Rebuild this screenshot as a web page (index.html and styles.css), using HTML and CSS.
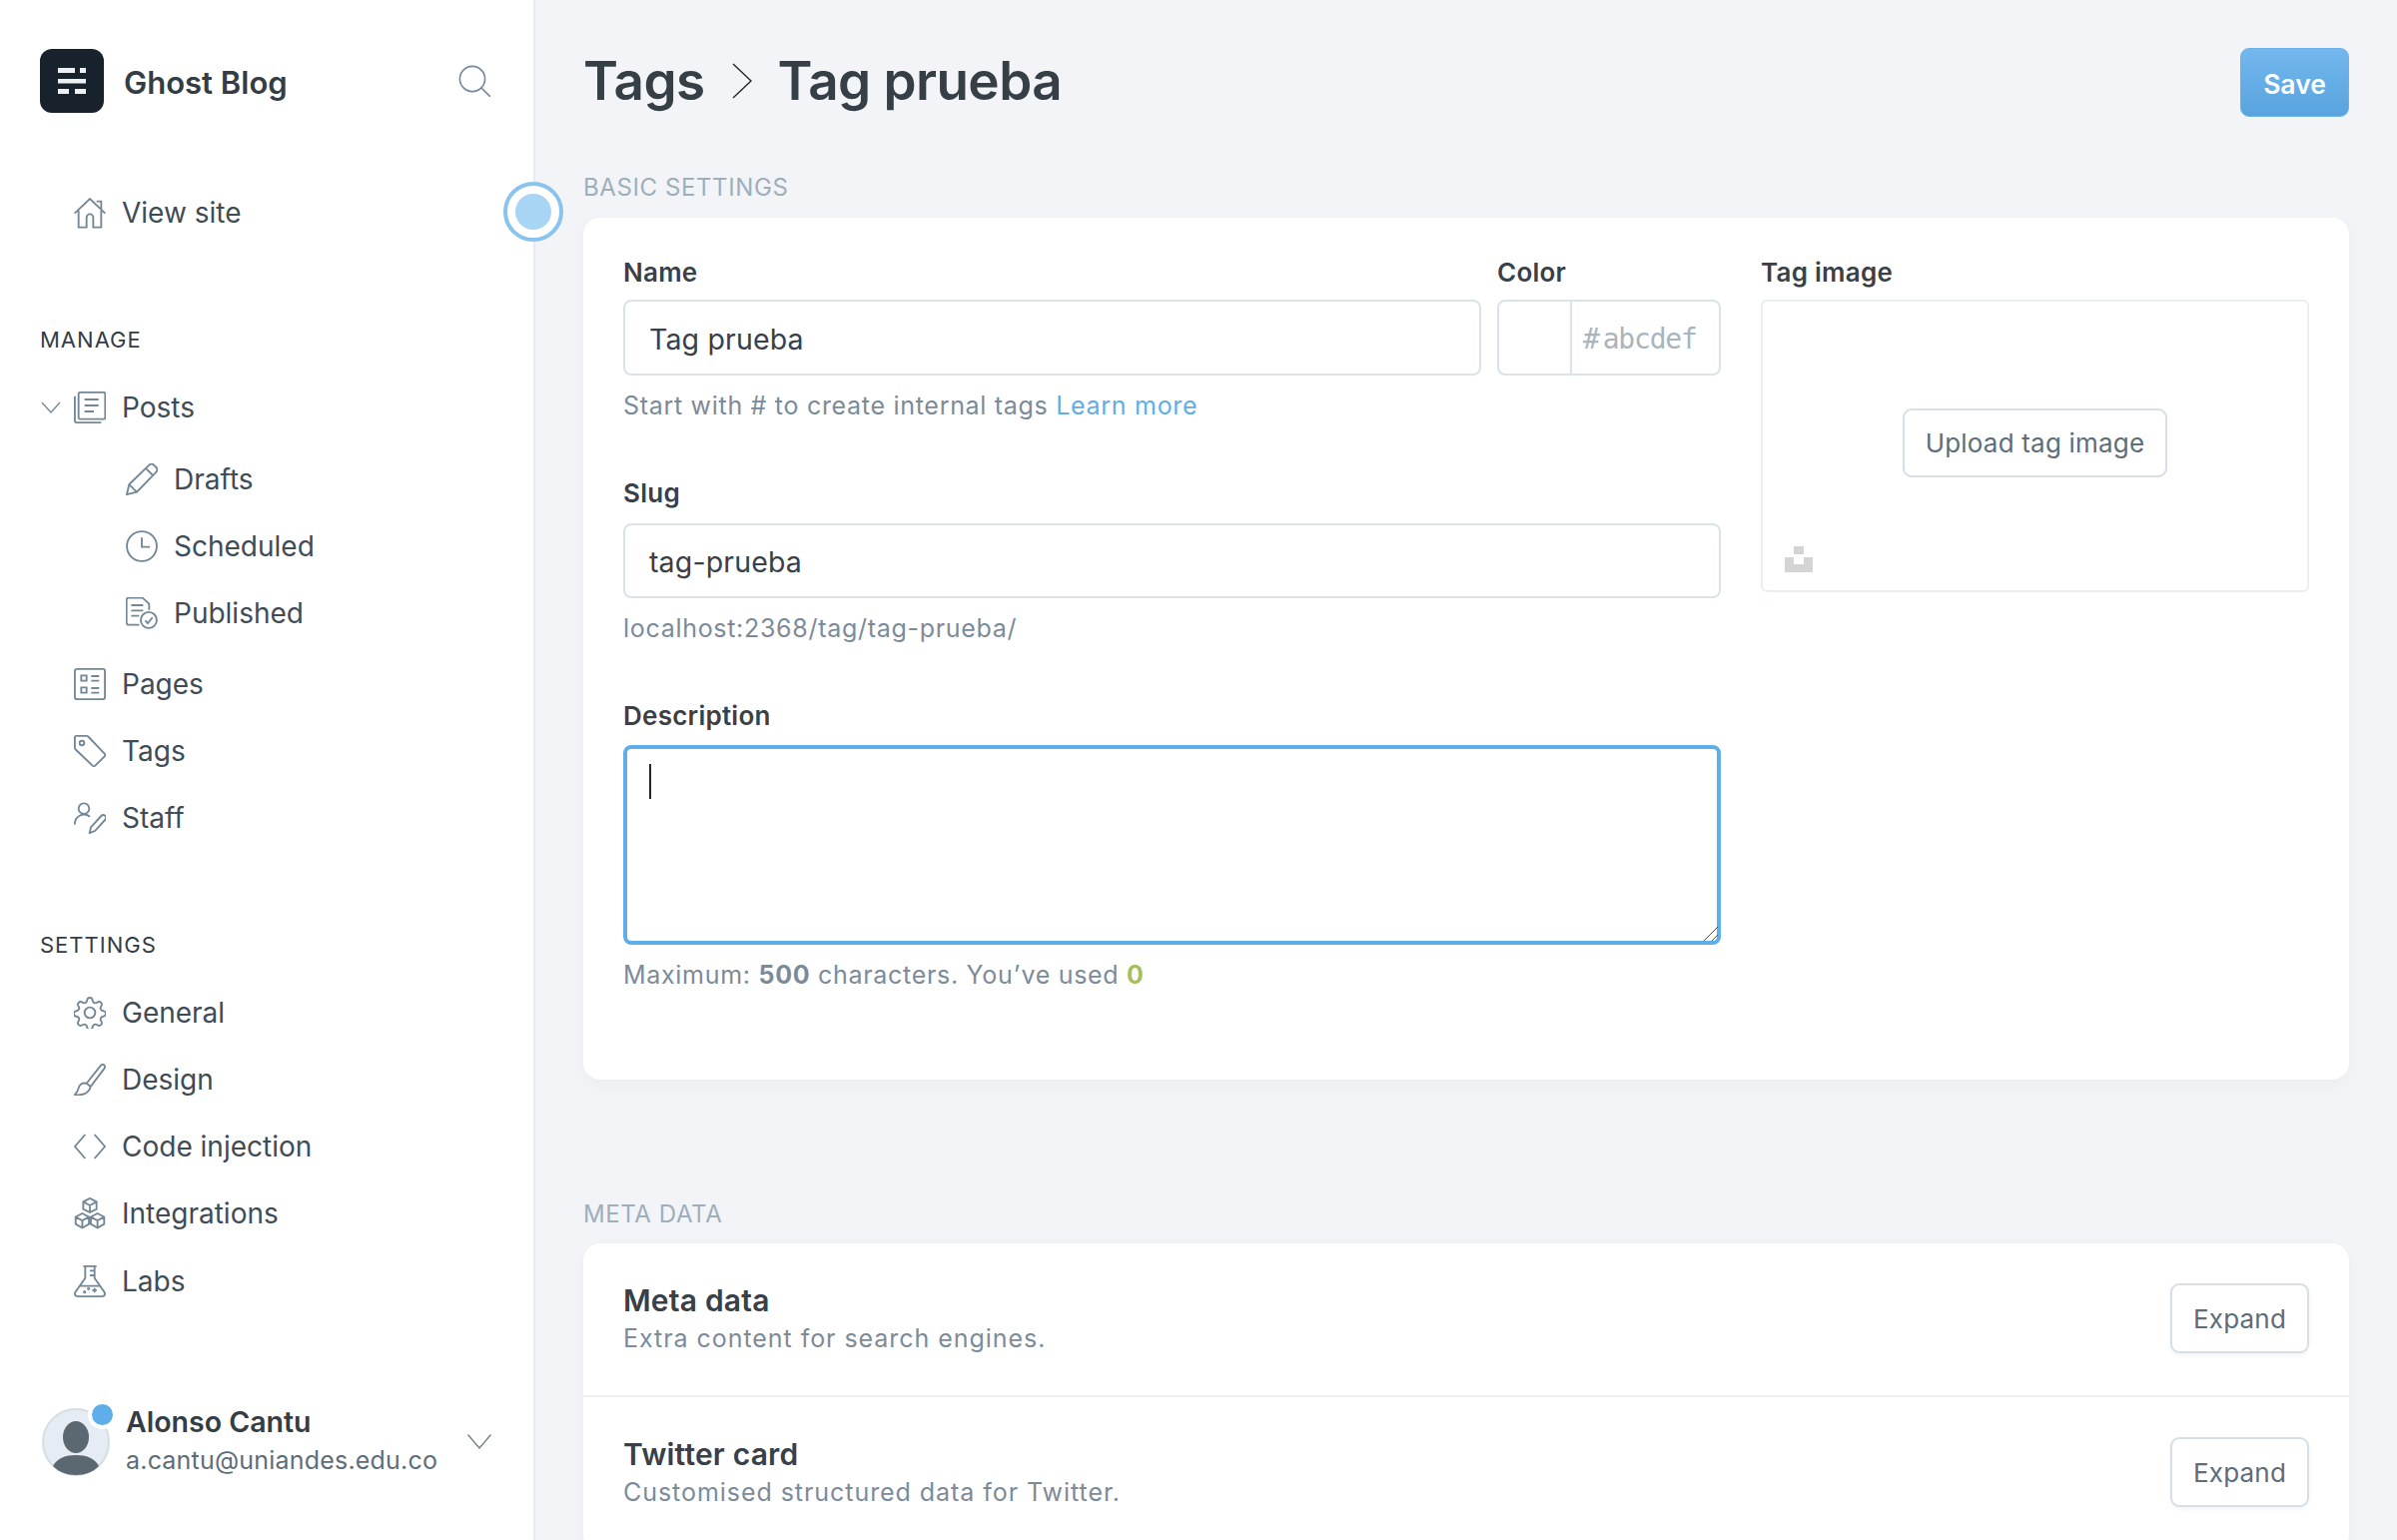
FILE: index.html
```html
<!DOCTYPE html>
<html>
<head>
<meta charset="utf-8">
<title>Tags - Ghost Blog</title>
<link rel="stylesheet" href="styles.css">
</head>
<body>
<div class="app">
  <!-- sidebar -->
  <aside class="side">
    <div class="brand">
      <svg class="logo" viewBox="0 0 64 64">
        <rect width="64" height="64" rx="12" fill="#18222c"/>
        <g fill="#eef1f4">
          <rect x="18" y="19" width="17" height="5"/><rect x="40" y="19" width="6" height="5"/>
          <rect x="18" y="30" width="28" height="4.5"/>
          <rect x="18" y="40" width="11" height="5"/><rect x="35" y="40" width="11" height="5"/>
        </g>
      </svg>
      <span class="brand-name">Ghost Blog</span>
      <svg class="search" viewBox="0 0 32 32"><circle cx="14" cy="14" r="12.6"/><path d="M23 23l9 9"/></svg>
    </div>

    <a class="nav view-site">
      <svg class="ico" viewBox="0 0 24 24"><path d="M.5 12.5L12 1.5l11.5 11M17 3.5h3.5V9M3.5 10.5v12.5h6v-7.500a2.500 2.500 0 015 0V23h6V10.500"/></svg>
      View site
    </a>

    <div class="side-head first">Manage</div>
    <a class="nav has-arrow">
      <svg class="arrow" viewBox="0 0 20 12"><path d="M1 1l9 10 9-10"/></svg>
      <svg class="ico" viewBox="0 0 24 24"><rect x="3.500" y=".7" width="20" height="20" rx="1"/><path d="M.7 3.500V22a1.300 1.300 0 001.300 1.300h18.500M8 6h10.500M8 10.500h10.500M8 15h7"/></svg>
      Posts
    </a>
    <div class="sub">
      <a class="nav sub-item">
        <svg class="ico" viewBox="0 0 24 24"><path d="M.7 23.300l1.800-7.500L17.500 1.200a2.500 2.500 0 013.500 0l1.800 1.800a2.500 2.500 0 010 3.500L8.200 21.500zM2.500 15.800l5.700 5.700M15 3.700l5.300 5.300M5 13.300L17.500 1.200M10.700 19L22.800 6.500"/></svg>
        Drafts
      </a>
      <a class="nav sub-item">
        <svg class="ico" viewBox="0 0 24 24"><circle cx="12" cy="12" r="11.200"/><path d="M12 5.500V12.500h6"/></svg>
        Scheduled
      </a>
      <a class="nav sub-item">
        <svg class="ico" viewBox="0 0 24 24"><path d="M10 20.700H2a1.500 1.500 0 01-1.500-1.500V2A1.500 1.500 0 012 .5h10.500l5 4.500v4.500M4 6h9M4 10h9M4 14h6"/><circle cx="17.200" cy="17.200" r="6"/><path d="M14.500 17.500l2 2 3.500-4.300"/></svg>
        Published
      </a>
    </div>
    <a class="nav">
      <svg class="ico" viewBox="0 0 24 24"><rect x=".7" y=".7" width="22.600" height="22.600" rx="1.500"/><path d="M5.500 5.500h4v4h-4zM5.500 14.500h4v4h-4zM13 6h6M13 9.500h6M13 15h6M13 18.500h6"/></svg>
      Pages
    </a>
    <a class="nav">
      <svg class="ico" viewBox="0 0 24 24"><path d="M1.800.7h7.700a2 2 0 011.400.6L23 14a1.500 1.500 0 010 2l-7 7a1.500 1.500 0 01-2 0L1.300 10.900a2 2 0 01-.6-1.400V1.800A1.100 1.100 0 011.800.7z"/><circle cx="6" cy="6" r="1.700"/></svg>
      Tags
    </a>
    <a class="nav">
      <svg class="ico" viewBox="0 0 24 24"><circle cx="7.500" cy="5" r="4"/><path d="M.7 17a7 7 0 0111.300-6M11.800 23.300l.9-4.300 7.800-8.500a2 2 0 013 2.800l-7.500 8.300z"/></svg>
      Staff
    </a>

    <div class="side-head">Settings</div>
    <a class="nav">
      <svg class="ico" viewBox="0 0 24 24"><circle cx="12" cy="12" r="4"/><path d="M10 2.300a2 2 0 013.900 0l.3 1a2 2 0 002.900 1.200l.9-.5a2 2 0 012.700 2.700l-.5.900a2 2 0 001.200 2.900l1 .3a2 2 0 010 3.900l-1 .3a2 2 0 00-1.200 2.900l.5.900a2 2 0 01-2.700 2.700l-.9-.5a2 2 0 00-2.900 1.200l-.3 1a2 2 0 01-3.900 0l-.3-1a2 2 0 00-2.900-1.200l-.9.500a2 2 0 01-2.700-2.700l.5-.9a2 2 0 00-1.200-2.900l-1-.3a2 2 0 010-3.900l1-.3a2 2 0 001.200-2.900l-.5-.9a2 2 0 012.700-2.700l.9.500a2 2 0 002.900-1.200z"/></svg>
      General
    </a>
    <a class="nav">
      <svg class="ico" viewBox="0 0 24 24"><path d="M9.500 14.800L20.300 1.300a1.700 1.700 0 012.500 2.400L12.500 17.300zM9.500 14.800c-3.500-.8-5.500 1-6 3.500-.3 2-1.200 3.500-2.800 5 4 .5 8-.2 10-2.500 1.200-1.300 1.700-2.500 1.800-3.500"/></svg>
      Design
    </a>
    <a class="nav">
      <svg class="ico" viewBox="0 0 24 24"><path d="M8.500 3L.7 12l7.800 9M15.500 3l7.800 9-7.800 9"/></svg>
      Code injection
    </a>
    <a class="nav">
      <svg class="ico" viewBox="0 0 24 24"><path d="M12 .7l5 2.600v5.400l-5 2.600-5-2.600V3.300zM7 3.300l5 2.700 5-2.700M12 6v5.300M6.300 12l5 2.600V20l-5 2.900-5-2.900v-5.400zM1.300 14.600l5 2.700 5-2.700M6.300 17.300v5.600M17.700 12l5 2.600V20l-5 2.900-5-2.900v-5.400zM12.700 14.600l5 2.700 5-2.700M17.700 17.300v5.600"/></svg>
      Integrations
    </a>
    <a class="nav labs">
      <svg class="ico" viewBox="0 0 24 24"><path d="M7 .7h10M8.500.7v8.800L1 20.300c-.8 1.500 0 3 1.800 3h18.400c1.800 0 2.600-1.500 1.800-3L15.500 9.500V.7M12 4h3.500M12 7.500h3.500M4.500 15.500h15"/><circle cx="8" cy="20" r=".5"/><circle cx="11" cy="17.500" r=".5"/><path d="M15.500 17v3.500M13.700 18.700h3.500"/></svg>
      Labs
    </a>

    <div class="user">
      <div class="avatar">
        <svg viewBox="0 0 68 68"><circle cx="34" cy="34" r="33" fill="#e5ecf3" stroke="#d5dde5" stroke-width="2"/><ellipse cx="34" cy="29" rx="13" ry="16" fill="#5b6871"/><path d="M11 58c4-8 13-11 23-11s19 3 23 11c-6 6-14 9-23 9s-17-3-23-9z" fill="#5b6871"/></svg>
        <span class="avatar-dot"></span>
      </div>
      <div class="user-text">
        <div class="user-name">Alonso Cantu</div>
        <div class="user-mail">a.cantu@uniandes.edu.co</div>
      </div>
      <svg class="user-arrow" viewBox="0 0 24 15"><path d="M.5.500L12 14 23.500.500"/></svg>
    </div>

    <span class="pulse"></span>
  </aside>

  <!-- main content -->
  <main class="main">
    <header class="top">
      <h1 class="crumbs">
        <span>Tags</span>
        <svg class="crumb-arrow" viewBox="0 0 20 36"><path d="M1 1l18 17L1 35"/></svg>
        <span>Tag prueba</span>
      </h1>
      <button class="btn-save">Save</button>
    </header>

    <div class="sec-title basic">Basic settings</div>
    <section class="card form-card">
      <div class="form-left">
        <div class="name-row">
          <div class="name-col">
            <label class="lbl">Name</label>
            <input class="txt name-input" value="Tag prueba">
          </div>
          <div class="color-col">
            <label class="lbl">Color</label>
            <div class="color-box">
              <span class="swatch"></span>
              <span class="color-val">#<i>abcdef</i></span>
            </div>
          </div>
        </div>
        <p class="hint">Start with # to create internal tags <a class="link">Learn more</a></p>

        <label class="lbl lbl-slug">Slug</label>
        <input class="txt slug-input" value="tag-prueba">
        <p class="hint">localhost:2368/tag/tag-prueba/</p>

        <label class="lbl lbl-desc">Description</label>
        <div class="desc-wrap">
          <textarea class="desc"></textarea>
          <span class="caret"></span>
          <svg class="grip" viewBox="0 0 14 14"><path d="M14 0L0 14M14 8l-6 6"/></svg>
        </div>
        <p class="hint">Maximum: <b>500</b> characters. You’ve used <b class="ok">0</b></p>
      </div>

      <div class="form-right">
        <label class="lbl">Tag image</label>
        <div class="img-box">
          <button class="btn upload">Upload tag image</button>
          <svg class="unsplash" viewBox="0 0 28 26"><path d="M9 0h10v8H9zM0 11h9v7h10v-7h9v15H0z" fill="#d4d4d4"/></svg>
        </div>
      </div>
    </section>

    <div class="sec-title meta">Meta data</div>
    <section class="card">
      <div class="meta-row">
        <div>
          <div class="meta-name">Meta data</div>
          <div class="meta-sub">Extra content for search engines.</div>
        </div>
        <button class="btn expand">Expand</button>
      </div>
      <div class="meta-row">
        <div>
          <div class="meta-name">Twitter card</div>
          <div class="meta-sub">Customised structured data for Twitter.</div>
        </div>
        <button class="btn expand">Expand</button>
      </div>
    </section>
  </main>
</div>
</body>
</html>
```

FILE: styles.css
```css
* {
  box-sizing: border-box;
}
html, body {
  margin: 0;
  height: 100%;
  overflow: hidden;
}
body {
  font-family: Inter, "Noto Sans", sans-serif;
  color: #394047;
  background: #f2f4f8;
}
.app {
  display: flex;
  height: 1542px;
}

/* sidebar */
.side {
  position: relative;
  flex: none;
  width: 536px;
  padding-top: 49px;
  display: flex;
  flex-direction: column;
  background: #fff;
  border-right: 2px solid #e8ebf0;
}
.brand {
  display: flex;
  align-items: center;
  height: 64px;
  padding: 0 43px 0 40px;
}
.logo {
  width: 64px;
  height: 64px;
}
.brand-name {
  margin-left: 20px;
  padding-top: 2px;
  font-size: 31px;
  font-weight: 600;
  color: #343d45;
}
.search {
  margin-left: auto;
  width: 32px;
  height: 32px;
  fill: none;
  stroke: #748796;
  stroke-width: 1.6;
}
.nav {
  display: flex;
  align-items: center;
  height: 67px;
  padding-left: 74px;
  font-size: 28px;
  color: #3f4c56;
}
.labs {
  margin-top: 1px;
}
.ico {
  flex: none;
  width: 32px;
  height: 32px;
  margin-right: 16px;
  fill: none;
  stroke: #748796;
  stroke-width: 1.4;
}
.view-site {
  margin-top: 66px;
}
.side-head {
  height: 28px;
  margin: 80px 0 20px 40px;
  font-size: 22px;
  line-height: 28px;
  letter-spacing: 1px;
  text-transform: uppercase;
  color: #343d45;
}
.has-arrow {
  padding-left: 41px;
}
.arrow {
  width: 20px;
  height: 12px;
  margin-right: 13px;
  fill: none;
  stroke: #748796;
  stroke-width: 1.3;
}
.sub {
  margin: 5px 0 4px;
}
.sub-item {
  padding-left: 126px;
}
.user {
  display: flex;
  align-items: center;
  margin-top: auto;
  margin-bottom: 62px;
  padding: 0 42px 0 42px;
}
.avatar {
  position: relative;
  width: 68px;
  height: 68px;
}
.avatar svg {
  display: block;
  width: 68px;
  height: 68px;
}
.avatar-dot {
  position: absolute;
  top: -4px;
  right: -3px;
  width: 21px;
  height: 21px;
  border-radius: 50%;
  background: #5fade9;
  box-shadow: 0 0 0 4px #fff;
}
.user-text {
  margin-left: 16px;
  padding-bottom: 3px;
}
.user-name {
  font-size: 28.5px;
  font-weight: 600;
  line-height: 34px;
  color: #343d45;
}
.user-mail {
  margin-top: 6px;
  font-size: 25px;
  line-height: 30px;
  letter-spacing: .2px;
  color: #5d6d79;
}
.user-arrow {
  margin-left: auto;
  width: 24px;
  height: 15px;
  fill: none;
  stroke: #6a7885;
  stroke-width: 1.2;
}
/* the pulsing dot sits over the sidebar edge */
.pulse {
  position: absolute;
  top: 182px;
  left: 504px;
  width: 60px;
  height: 60px;
  border-radius: 50%;
  border: 4px solid #8ac4ee;
  background: #fff;
}
.pulse::after {
  content: "";
  position: absolute;
  top: 8px;
  left: 8px;
  width: 36px;
  height: 36px;
  border-radius: 50%;
  background: #a9d5f5;
}

/* main */
.main {
  flex: 1;
  padding: 48px 48px 0 48px;
  min-width: 0;
}
.top {
  display: flex;
  align-items: center;
  justify-content: space-between;
  height: 69px;
}
.crumbs {
  display: flex;
  align-items: center;
  margin: -4px 0 0;
  font-size: 53px;
  font-weight: 600;
  letter-spacing: -.55px;
  color: #363f45;
}
.crumb-arrow {
  width: 20px;
  height: 36px;
  margin: 0 26px 0 27px;
  fill: none;
  stroke: #21272b;
  stroke-width: 1.4;
}
.btn-save {
  width: 109px;
  height: 69px;
  padding: 2px 0 0;
  border: 1px solid #6cb2e9;
  border-radius: 9px;
  background: linear-gradient(#73b8ee, #58a3de);
  font-family: inherit;
  font-size: 26.5px;
  font-weight: 600;
  color: #fff;
}
.sec-title {
  height: 28px;
  margin-bottom: 17px;
  font-size: 24px;
  line-height: 29px;
  letter-spacing: .6px;
  text-transform: uppercase;
  color: #9fafba;
}
.basic {
  margin-top: 56px;
}
.meta {
  margin-top: 120px;
  margin-bottom: 16px;
}
.card {
  background: #fff;
  border-radius: 16px;
  box-shadow: 0 0 1px rgba(0, 0, 0, .08), 0 6px 18px rgba(0, 0, 0, .03);
}
.form-card {
  display: flex;
  gap: 40px;
  height: 863px;
  padding: 40px 40px 0;
}
.form-left {
  flex: none;
  width: 1099px;
}
.form-right {
  flex: 1;
}
.lbl {
  display: block;
  height: 28px;
  margin-bottom: 14px;
  font-size: 26px;
  font-weight: 600;
  line-height: 30px;
  letter-spacing: .25px;
  color: #394047;
}
.lbl-slug {
  margin-top: 58px;
  margin-bottom: 17px;
}
.lbl-desc {
  margin-top: 58px;
  margin-bottom: 16px;
}
.name-row {
  display: flex;
  gap: 16px;
}
.name-col {
  flex: none;
  width: 859px;
}
.color-col {
  flex: 1;
}
.txt {
  display: block;
  width: 100%;
  padding: 2px 24px 0;
  border: 2px solid #dae3ea;
  border-radius: 8px;
  outline: none;
  background: #fff;
  font-family: inherit;
  font-size: 28.5px;
  letter-spacing: .15px;
  color: #394047;
}
.name-input {
  height: 76px;
}
.slug-input {
  height: 75px;
}
.color-box {
  display: flex;
  height: 76px;
  border: 2px solid #dae3ea;
  border-radius: 8px;
}
.swatch {
  flex: none;
  width: 73px;
  border-right: 2px solid #dae3ea;
}
.color-val {
  padding-left: 11px;
  font-family: "DejaVu Sans Mono", monospace;
  font-size: 28px;
  line-height: 76px;
  color: #a9b5bd;
  letter-spacing: -1.2px;
}
.color-val i {
  margin-left: 4px;
  font-style: normal;
}
.hint {
  height: 30px;
  margin: 15px 0 0;
  font-size: 25px;
  line-height: 30px;
  letter-spacing: .7px;
  color: #7c8b9a;
}
.hint b {
  font-weight: 700;
}
.link {
  color: #5fade9;
}
.ok {
  color: #a4bf5c;
}
.desc-wrap {
  position: relative;
  height: 200px;
}
.desc {
  display: block;
  width: 100%;
  height: 200px;
  border: 4px solid #5fade9;
  border-radius: 8px;
  outline: none;
  background: #fff;
  resize: none;
}
.caret {
  position: absolute;
  top: 19px;
  left: 26px;
  width: 2px;
  height: 35px;
  background: #21272b;
}
.grip {
  position: absolute;
  right: 3px;
  bottom: 4px;
  width: 14px;
  height: 14px;
  fill: none;
  stroke: #555;
  stroke-width: 1;
}
.img-box {
  position: relative;
  display: flex;
  align-items: center;
  justify-content: center;
  height: 293px;
  padding-bottom: 6px;
  border: 2px solid #e8eef3;
  border-radius: 6px;
}
.btn {
  border: 2px solid #d5dfe5;
  border-radius: 9px;
  background: #fff;
  font-family: inherit;
  font-size: 26px;
  letter-spacing: .2px;
  color: #5d6d79;
}
.upload {
  width: 265px;
  height: 69px;
  padding: 0;
}
.unsplash {
  position: absolute;
  left: 22px;
  bottom: 18px;
  width: 28px;
  height: 26px;
}
.meta-row {
  display: flex;
  align-items: center;
  justify-content: space-between;
  height: 154px;
  padding: 41px 40px 43px;
  border-bottom: 2px solid #edf1f4;
}
.meta-name {
  font-size: 30px;
  font-weight: 600;
  line-height: 32px;
  letter-spacing: .2px;
  color: #394047;
}
.meta-sub {
  margin-top: 7px;
  font-size: 25px;
  line-height: 30px;
  letter-spacing: .95px;
  color: #7c8b9a;
}
.expand {
  flex: none;
  width: 139px;
  height: 70px;
  padding: 0;
  box-shadow: 0 2px 5px rgba(0, 0, 0, .05);
}
```
